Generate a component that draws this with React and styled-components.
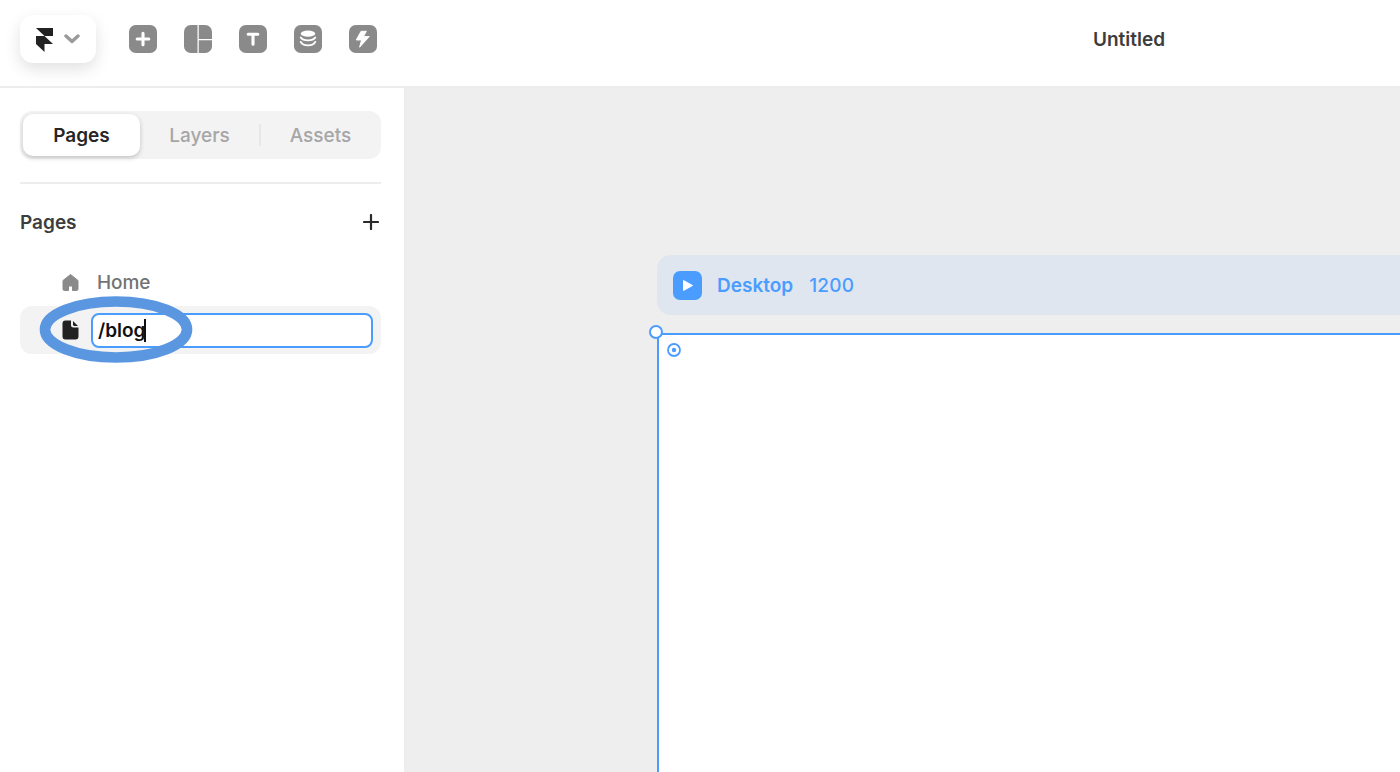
import React from "react";
import styled, { createGlobalStyle } from "styled-components";

const Global = createGlobalStyle`
  html, body { margin: 0; padding: 0; height: 100%; background: #fff; }
  body { font-family: Inter, "Liberation Sans", sans-serif; overflow: hidden; }
  #root { height: 100%; }
`;

const Page = styled.div`
  width: 1400px;
  height: 772px;
  display: flex;
  flex-direction: column;
  overflow: hidden;
  position: relative;
`;

const TopBar = styled.header`
  flex: none;
  display: flex;
  align-items: center;
  padding: 0 0 8px 20px;
  box-sizing: border-box;
  border-bottom: 2px solid #ededed;
  height: 88px;
  position: relative;
`;

const LogoButton = styled.div`
  width: 76px;
  height: 48px;
  border-radius: 13px;
  background: #fff;
  box-shadow: 0 6px 16px rgba(0, 0, 0, 0.12);
  display: flex;
  align-items: center;
  gap: 9px;
  padding-left: 15px;
  box-sizing: border-box;
  margin-right: 33px;
`;

const Tools = styled.div`
  display: flex;
  gap: 27px;
`;

const ToolIcon = styled.svg`
  width: 28px;
  height: 28px;
  display: block;
`;

const Title = styled.div`
  position: absolute;
  left: 1093px;
  top: 28px;
  font-size: 19px;
  line-height: 23px;
  font-weight: 600;
  color: #3d3d3d;
`;

const Body = styled.div`
  flex: 1;
  display: flex;
  min-height: 0;
`;

const Sidebar = styled.aside`
  width: 405px;
  flex: none;
  box-sizing: border-box;
  padding: 23px 23px 0 20px;
  border-right: 1px solid #ececec;
  background: #fff;
`;

const Tabs = styled.div`
  height: 48px;
  border-radius: 12px;
  background: #f3f3f3;
  display: flex;
  align-items: center;
  padding: 0 3px;
  box-sizing: border-box;
`;

const Tab = styled.div`
  width: ${(p) => (p.$active ? "117px" : "119px")};
  height: 42px;
  flex: none;
  display: flex;
  align-items: center;
  justify-content: center;
  font-size: 19px;
  font-weight: ${(p) => (p.$active ? 600 : 500)};
  color: ${(p) => (p.$active ? "#262626" : "#a6a6a6")};
  background: ${(p) => (p.$active ? "#fff" : "transparent")};
  border-radius: 10px;
  box-shadow: ${(p) => (p.$active ? "0 2px 5px rgba(0,0,0,0.2)" : "none")};
`;

const TabDivider = styled.div`
  width: 2px;
  height: 22px;
  background: #e8e8e8;
  flex: none;
`;

const Rule = styled.div`
  height: 2px;
  background: #ededed;
  margin-top: 23px;
`;

const SectionHead = styled.div`
  display: flex;
  align-items: center;
  justify-content: space-between;
  height: 24px;
  margin-top: 26px;
  padding-right: 2px;
`;

const SectionTitle = styled.div`
  font-size: 19px;
  font-weight: 600;
  color: #3d3d3d;
`;

const PageList = styled.div`
  margin-top: 24px;
  display: flex;
  flex-direction: column;
`;

const PageRow = styled.div`
  height: 48px;
  display: flex;
  align-items: center;
  padding: 0 8px 0 41px;
  gap: ${(p) => (p.$editing ? "11px" : "17px")};
  border-radius: 12px;
  background: ${(p) => (p.$editing ? "#f3f3f3" : "transparent")};
`;

const RowIcon = styled.svg`
  width: 19px;
  height: 20px;
  flex: none;
  display: block;
`;

const RowLabel = styled.div`
  font-size: 19px;
  font-weight: 500;
  color: #737373;
  letter-spacing: -0.1px;
`;

const NameInput = styled.div`
  flex: 1;
  height: 35px;
  box-sizing: border-box;
  border: 2px solid #4a9dff;
  border-radius: 8px;
  background: #fff;
  display: flex;
  align-items: center;
  padding-left: 5px;
  font-size: 19px;
  font-weight: 600;
  color: #111;
`;

const Caret = styled.span`
  width: 1.5px;
  height: 23px;
  background: #111;
  display: inline-block;
  margin-left: -1px;
`;

const Annotation = styled.svg`
  position: absolute;
  left: 34px;
  top: 290px;
  width: 166px;
  height: 80px;
  pointer-events: none;
`;

const Canvas = styled.main`
  flex: 1;
  min-width: 0;
  background: #eeeeee;
  padding: 167px 0 0 252px;
  display: flex;
  flex-direction: column;
  overflow: hidden;
`;

const FrameBar = styled.div`
  width: 760px;
  height: 60px;
  flex: none;
  background: #dfe6ef;
  border-radius: 14px 0 0 14px;
  display: flex;
  align-items: center;
  padding-left: 16px;
  box-sizing: border-box;
  font-size: 19px;
  color: #4a9dff;
`;

const PlayBadge = styled.div`
  width: 29px;
  height: 29px;
  border-radius: 7px;
  background: #4a9dff;
  display: flex;
  align-items: center;
  justify-content: center;
  margin-right: 15px;
`;

const FrameName = styled.span`
  font-weight: 600;
  margin-right: 16px;
`;

const FrameSize = styled.span`
  font-weight: 500;
  letter-spacing: 0.2px;
`;

const Frame = styled.div`
  flex: 1;
  margin-top: 18px;
  background: #fff;
  border-top: 2px solid #4a9dff;
  border-left: 2px solid #4a9dff;
  position: relative;
`;

const Handle = styled.div`
  position: absolute;
  left: -10px;
  top: -10px;
  width: 14px;
  height: 14px;
  box-sizing: border-box;
  border: 2px solid #4a9dff;
  border-radius: 50%;
  background: #fff;
`;

const Target = styled.svg`
  position: absolute;
  left: 7px;
  top: 7px;
  width: 16px;
  height: 16px;
`;

const Tool = ({ children }) => (
  <ToolIcon viewBox="0 0 29 29">{children}</ToolIcon>
);

const G = "#8a8a8a";

export default function App() {
  return (
    <Page>
      <Global />
      <TopBar>
        <LogoButton>
          <svg width="20" height="25" viewBox="0 0 20 25">
            <path d="M1 1h17v8H9.500z M1 9h8.500l8.500 8H9.500v8L1 17z" fill="#222" />
          </svg>
          <svg width="16" height="10" viewBox="0 0 16 10">
            <path d="M2 2l6 5.500L14 2" fill="none" stroke="#9a9a9a" strokeWidth="3.400" strokeLinecap="round" strokeLinejoin="round" />
          </svg>
        </LogoButton>
        <Tools>
          <Tool>
            <rect width="29" height="29" rx="7" fill={G} />
            <path d="M14.500 8.500v12M8.500 14.500h12" stroke="#fff" strokeWidth="3.200" strokeLinecap="round" />
          </Tool>
          <Tool>
            <path d="M7 0h7v29H7a7 7 0 0 1-7-7V7a7 7 0 0 1 7-7z" fill={G} />
            <path d="M15.300 0H22a7 7 0 0 1 7 7v7.500H15.300z" fill={G} />
            <path d="M15.300 15.800H29V22a7 7 0 0 1-7 7h-6.700z" fill={G} />
          </Tool>
          <Tool>
            <rect width="29" height="29" rx="7" fill={G} />
            <path d="M9.500 9.500h10M14.500 9.500v10.500" stroke="#fff" strokeWidth="3.200" strokeLinecap="round" />
          </Tool>
          <Tool>
            <rect width="29" height="29" rx="7" fill={G} />
            <ellipse cx="14.500" cy="9" rx="7.500" ry="3.200" fill="#fff" />
            <path d="M7 13c1.200 1.900 4 2.900 7.500 2.900S20.800 14.900 22 13" fill="none" stroke="#fff" strokeWidth="2" strokeLinecap="round" />
            <path d="M7 17.500c1.200 2.500 4 3.600 7.500 3.600s6.300-1.100 7.500-3.600" fill="none" stroke="#fff" strokeWidth="2" strokeLinecap="round" />
          </Tool>
          <Tool>
            <rect width="29" height="29" rx="7" fill={G} />
            <path d="M12.500 6.500h5.500l-3 5.500h6L11 23l2-7.500H7.500z" fill="#fff" strokeLinejoin="round" stroke="#fff" strokeWidth="1" />
          </Tool>
        </Tools>
        <Title>Untitled</Title>
      </TopBar>
      <Body>
        <Sidebar>
          <Tabs>
            <Tab $active>Pages</Tab>
            <Tab>Layers</Tab>
            <TabDivider />
            <Tab>Assets</Tab>
          </Tabs>
          <Rule />
          <SectionHead>
            <SectionTitle>Pages</SectionTitle>
            <svg width="16" height="16" viewBox="0 0 16 16">
              <path d="M8 1v14M1 8h14" stroke="#2a2a2a" strokeWidth="2.200" strokeLinecap="round" />
            </svg>
          </SectionHead>
          <PageList>
            <PageRow>
              <RowIcon viewBox="0 0 19 20">
                <path d="M9.500 2.500L2 8.500V17a1.500 1.500 0 0 0 1.500 1.500H7.500v-4.500h4v4.500h4A1.500 1.500 0 0 0 17 17V8.500z" fill={G} stroke={G} strokeLinejoin="round" />
              </RowIcon>
              <RowLabel>Home</RowLabel>
            </PageRow>
            <PageRow $editing>
              <RowIcon viewBox="0 0 19 20">
                <path d="M4.500 0.500H10v4.500A2.500 2.500 0 0 0 12.500 7.500H17.500v9A3 3 0 0 1 14.500 19.500h-10A3 3 0 0 1 1.500 16.500V3.500a3 3 0 0 1 3-3z" fill="#222" />
                <path d="M12 1l5 5h-3.500A1.500 1.500 0 0 1 12 4.500z" fill="#222" />
              </RowIcon>
              <NameInput>
                /blog
                <Caret />
              </NameInput>
            </PageRow>
          </PageList>
        </Sidebar>
        <Canvas>
          <FrameBar>
            <PlayBadge>
              <svg width="12" height="13" viewBox="0 0 12 13">
                <path d="M1.500 1.500v10l9-5z" fill="#fff" stroke="#fff" strokeLinejoin="round" />
              </svg>
            </PlayBadge>
            <FrameName>Desktop</FrameName>
            <FrameSize>1200</FrameSize>
          </FrameBar>
          <Frame>
            <Handle />
            <Target viewBox="0 0 16 16">
              <circle cx="8" cy="8" r="6" fill="none" stroke="#4a9dff" strokeWidth="1.800" />
              <circle cx="8" cy="8" r="2.200" fill="#4a9dff" />
            </Target>
          </Frame>
        </Canvas>
      </Body>
      <Annotation viewBox="0 0 166 80">
        <ellipse cx="82" cy="39.500" rx="71" ry="28" fill="none" stroke="#5b97e0" strokeWidth="10.700" />
      </Annotation>
    </Page>
  );
}
